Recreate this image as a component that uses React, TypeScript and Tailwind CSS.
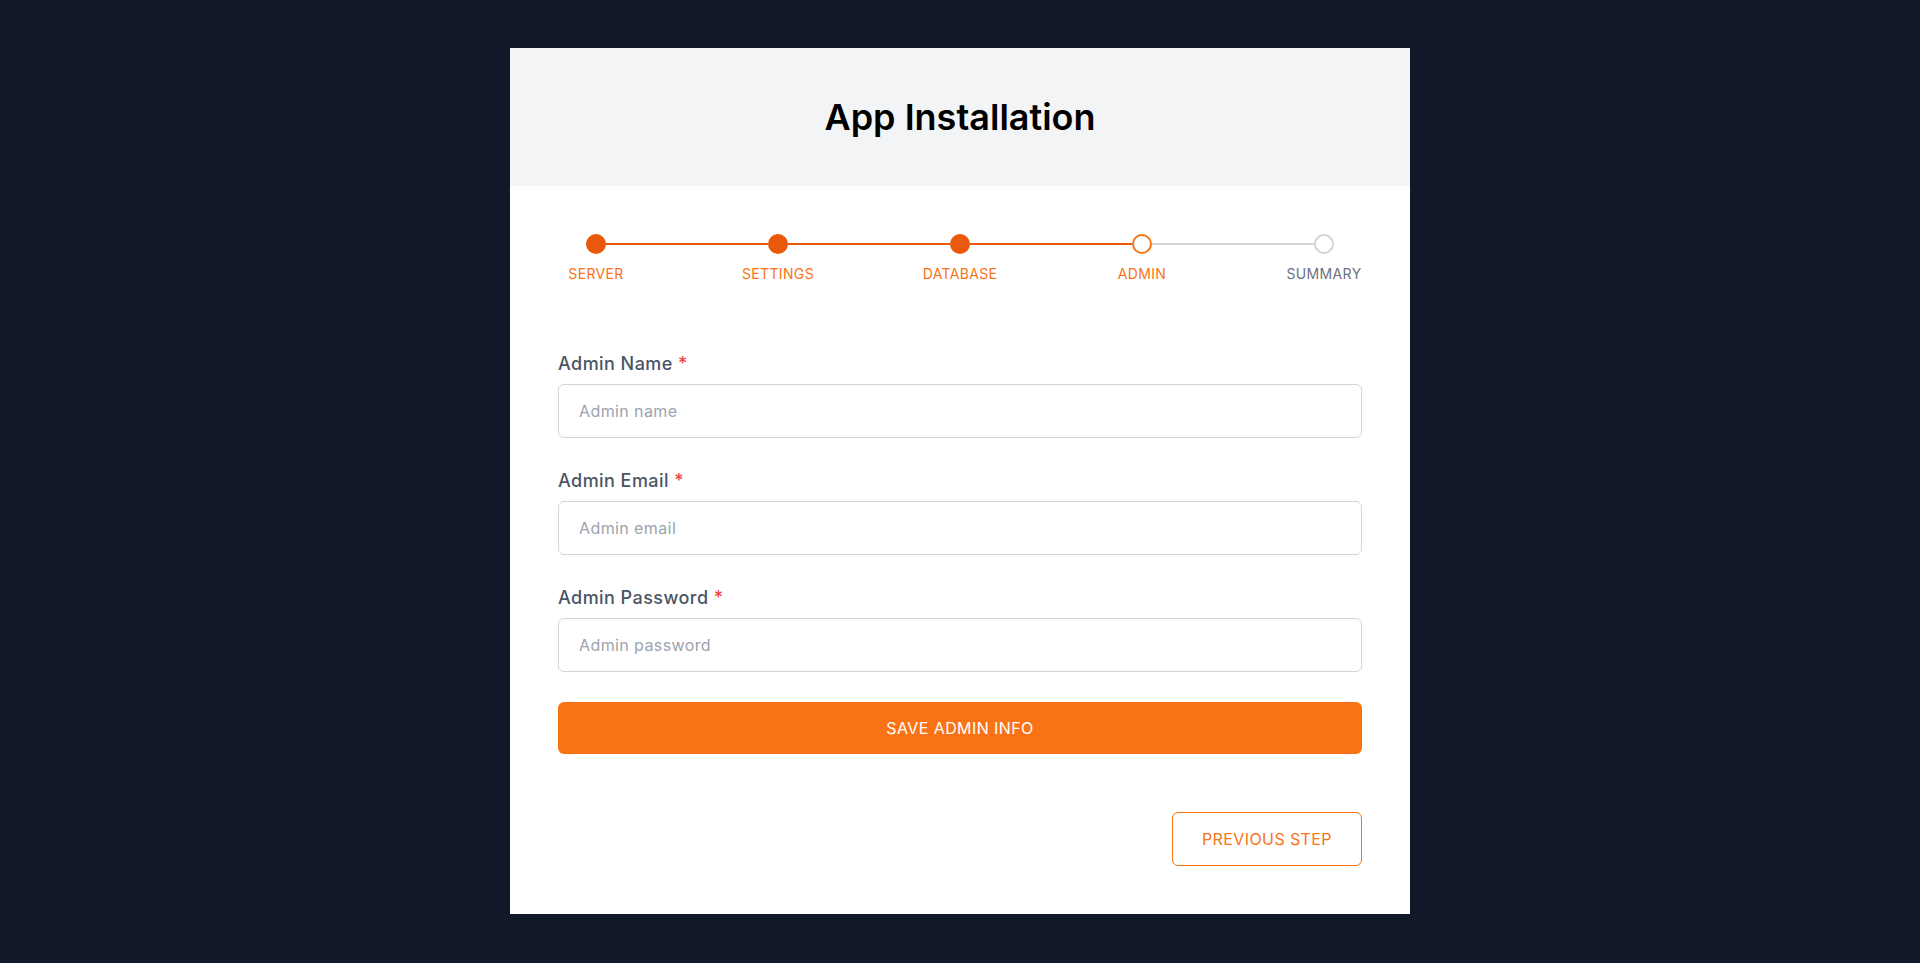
import React, { useState } from 'react';

type Step = { key: string; label: string };

const steps: Step[] = [
  { key: 'server', label: 'Server' },
  { key: 'settings', label: 'Settings' },
  { key: 'database', label: 'Database' },
  { key: 'admin', label: 'Admin' },
  { key: 'summary', label: 'Summary' },
];

const current = 3;

const labelClass = "block text-lg font-medium tracking-wide text-[#4b5563] mb-1.5 leading-7";
const inputClass =
  "w-full h-[54px] px-5 border border-[#d1d5db] rounded-md text-base tracking-wide text-gray-700 placeholder-[#9ca3af] outline-none focus:border-[#f97316]";

const Stepper: React.FC = () => (
  <div className="flex items-start">
    {steps.map((s, i) => {
      const done = i < current;
      const active = i === current;
      return (
        <React.Fragment key={s.key}>
          {i > 0 && (
            <div
              className={
                "flex-1 h-0.5 mt-[9px] -mx-[28px] " +
                (i <= current ? "bg-[#ea580c]" : "bg-[#d1d5db]")
              }
            />
          )}
          <div className="w-[76px] flex flex-col items-center">
            {done ? (
              <span className="w-5 h-5 rounded-full bg-[#ea580c]" />
            ) : active ? (
              <span className="w-5 h-5 rounded-full bg-white border-2 border-[#f97316]" />
            ) : (
              <span className="w-5 h-5 rounded-full bg-white border-2 border-[#d1d5db]" />
            )}
            <span
              className={
                "mt-[10px] text-sm leading-5 uppercase tracking-wide whitespace-nowrap " +
                (done || active ? "text-[#f97316]" : "text-[#6b7280]")
              }
            >
              {s.label}
            </span>
          </div>
        </React.Fragment>
      );
    })}
  </div>
);

const App: React.FC = () => {
  const [form, setForm] = useState({ name: '', email: '', password: '' });

  return (
    <div className="min-h-screen bg-[#111827] pt-12 pb-12" style={{ fontFamily: 'Inter, "Noto Sans", sans-serif' }}>
      <div className="w-[900px] mx-auto bg-white">
        {/* header */}
        <div className="bg-[#f3f4f6] py-[49px] text-center">
          <h1 className="text-4xl leading-10 font-semibold text-black">App Installation</h1>
        </div>

        <div className="px-12 pt-12 pb-12">
          <Stepper />

          <form className="mt-[66px] flex flex-col gap-[29px]" onSubmit={e => e.preventDefault()}>
            <div>
              <label className={labelClass}>
                Admin Name <span className="text-[#ef4444]">*</span>
              </label>
              <input
                className={inputClass}
                placeholder="Admin name"
                value={form.name}
                onChange={e => setForm({ ...form, name: e.target.value })}
              />
            </div>
            <div>
              <label className={labelClass}>
                Admin Email <span className="text-[#ef4444]">*</span>
              </label>
              <input
                className={inputClass}
                type="email"
                placeholder="Admin email"
                value={form.email}
                onChange={e => setForm({ ...form, email: e.target.value })}
              />
            </div>
            <div>
              <label className={labelClass}>
                Admin Password <span className="text-[#ef4444]">*</span>
              </label>
              <input
                className={inputClass}
                type="password"
                placeholder="Admin password"
                value={form.password}
                onChange={e => setForm({ ...form, password: e.target.value })}
              />
            </div>
            <button
              type="submit"
              className="w-full mt-px py-3.5 rounded-md bg-[#f97316] text-white text-base leading-6 tracking-wide uppercase hover:bg-[#ea580c]"
            >
              Save Admin Info
            </button>
          </form>

          <div className="flex justify-end mt-[58px]">
            <button
              type="button"
              className="w-[190px] h-[54px] flex items-center justify-center border border-[#f97316] rounded-md text-[#f97316] text-base tracking-wide uppercase hover:bg-orange-50"
            >
              Previous Step
            </button>
          </div>
        </div>
      </div>
    </div>
  );
};

export default App;
